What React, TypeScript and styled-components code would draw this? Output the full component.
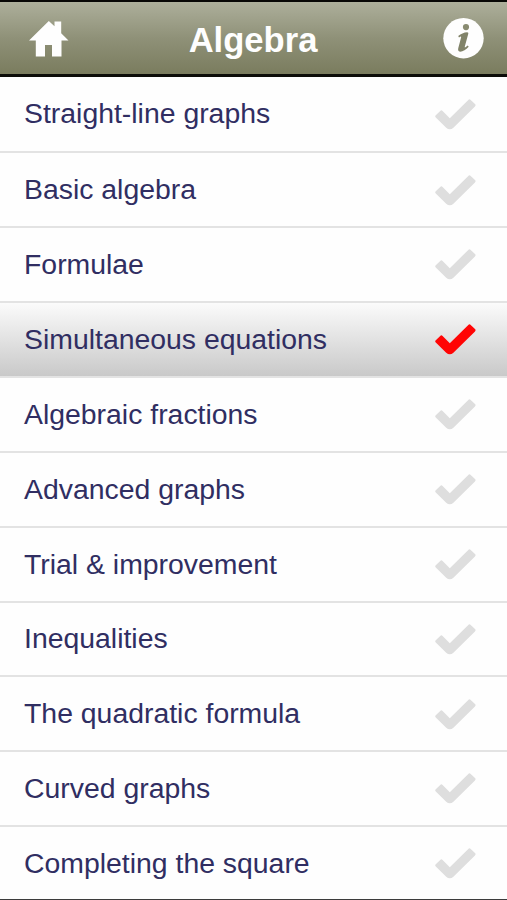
import React from "react";
import styled, { createGlobalStyle } from "styled-components";

const GlobalStyle = createGlobalStyle`
  * { box-sizing: border-box; }
  body {
    margin: 0;
    background: #fefefe;
    font-family: "Liberation Sans", Arial, sans-serif;
  }
`;

const Screen = styled.main`
  display: flex;
  flex-direction: column;
  width: 507px;
  height: 900px;
  overflow: hidden;
  background: #fefefe;
  border-bottom: 1px solid #3c3c3c;
`;

const Header = styled.header`
  display: grid;
  grid-template-columns: 96px 1fr 96px;
  align-items: center;
  flex: none;
  height: 77px;
  border-top: 2px solid #080806;
  border-bottom: 3px solid #0c0c08;
  background: linear-gradient(#adaf9b, #8f9178 50%, #7a7c5e);
`;

const Title = styled.h1`
  margin: 0;
  padding: 3px 1px 0 0;
  text-align: center;
  color: #fefefe;
  font-size: 34.6px;
  line-height: 40px;
  font-weight: 700;
`;

const IconButton = styled.button<{ $side: "left" | "right" }>`
  display: flex;
  justify-content: ${(p) => (p.$side === "left" ? "flex-start" : "flex-end")};
  padding: ${(p) => (p.$side === "left" ? "1px 0 0 29px" : "1px 23px 0 0")};
  border: 0;
  background: none;
  color: #fefefe;
`;

const List = styled.ul`
  flex: none;
  margin: 0;
  padding: 0;
  list-style: none;
`;

const Label = styled.span`
  margin-bottom: 1px;
  color: #302e62;
  font-size: 28.4px;
  line-height: 32px;
  white-space: nowrap;
`;

const Row = styled.li<{ $active: boolean }>`
  display: flex;
  align-items: center;
  justify-content: space-between;
  height: 74.87px;
  padding: 0 31px 0 24px;
  border-bottom: 2px solid #e3e3e3;
  background: ${(p) => (p.$active ? "linear-gradient(#fbfbfb, #c9c9c9)" : "#fefefe")};
  color: ${(p) => (p.$active ? "#ff0505" : "#dedede")};

  &:first-child { height: 76.4px; }
  &:first-child ${Label} { margin-bottom: 2px; }
  &:last-child { border-bottom-color: transparent; }
`;

const CheckSvg = styled.svg`
  flex: none;
  margin-top: 0.6px;
`;

const Check = () => (
  <CheckSvg width="41" height="31" viewBox="0 0 41 31" fill="currentColor">
    <path d="M.8 16.2 5.2 11.9Q6.4 10.8 7.6 11.9L14.8 19.2 33.3.9Q34.5-.2 35.7.9L40 5.1Q41.1 6.2 40 7.4L18.4 28.7Q14.8 31.7 11.2 28.7L.8 18.5Q-.4 17.4.8 16.2Z" />
  </CheckSvg>
);

const HomeIcon = () => (
  <svg width="40" height="36" viewBox="0 0 40 36" fill="currentColor">
    <path d="M0 19.5 19.8 0 25.5 5.3V.5H32.2V12.2L39.5 19.5H32.5V35.5H23V24H16V35.5H6.8V19.5Z" />
  </svg>
);

const InfoIcon = () => (
  <svg width="41" height="41" viewBox="0 0 41 41">
    <circle cx="20.5" cy="20.2" r="20.2" fill="currentColor" />
    <circle cx="23" cy="9.1" r="3.1" fill="#898b71" />
    <path
      d="M15.2 17.9C18 15.8 20.8 14.4 24.2 14.2Q25.7 14.2 25.3 15.8L21.8 28.6Q21.5 30.1 22.8 29.1L24.7 27.5 25.7 28.8C23 31.6 20 33.7 17.2 33.7 15.1 33.7 14.8 31.9 15.3 30.1L18.1 19.5Q18.4 18.2 17.2 18.8L16 19.5Z"
      fill="#818369"
    />
  </svg>
);

const topics = [
  "Straight-line graphs",
  "Basic algebra",
  "Formulae",
  "Simultaneous equations",
  "Algebraic fractions",
  "Advanced graphs",
  "Trial & improvement",
  "Inequalities",
  "The quadratic formula",
  "Curved graphs",
  "Completing the square",
];

export default function App() {
  return (
    <Screen>
      <GlobalStyle />
      <Header>
        <IconButton $side="left" aria-label="Home"><HomeIcon /></IconButton>
        <Title>Algebra</Title>
        <IconButton $side="right" aria-label="Information"><InfoIcon /></IconButton>
      </Header>
      <List>
        {topics.map((topic) => (
          <Row key={topic} $active={topic === "Simultaneous equations"}>
            <Label>{topic}</Label>
            <Check />
          </Row>
        ))}
      </List>
    </Screen>
  );
}
